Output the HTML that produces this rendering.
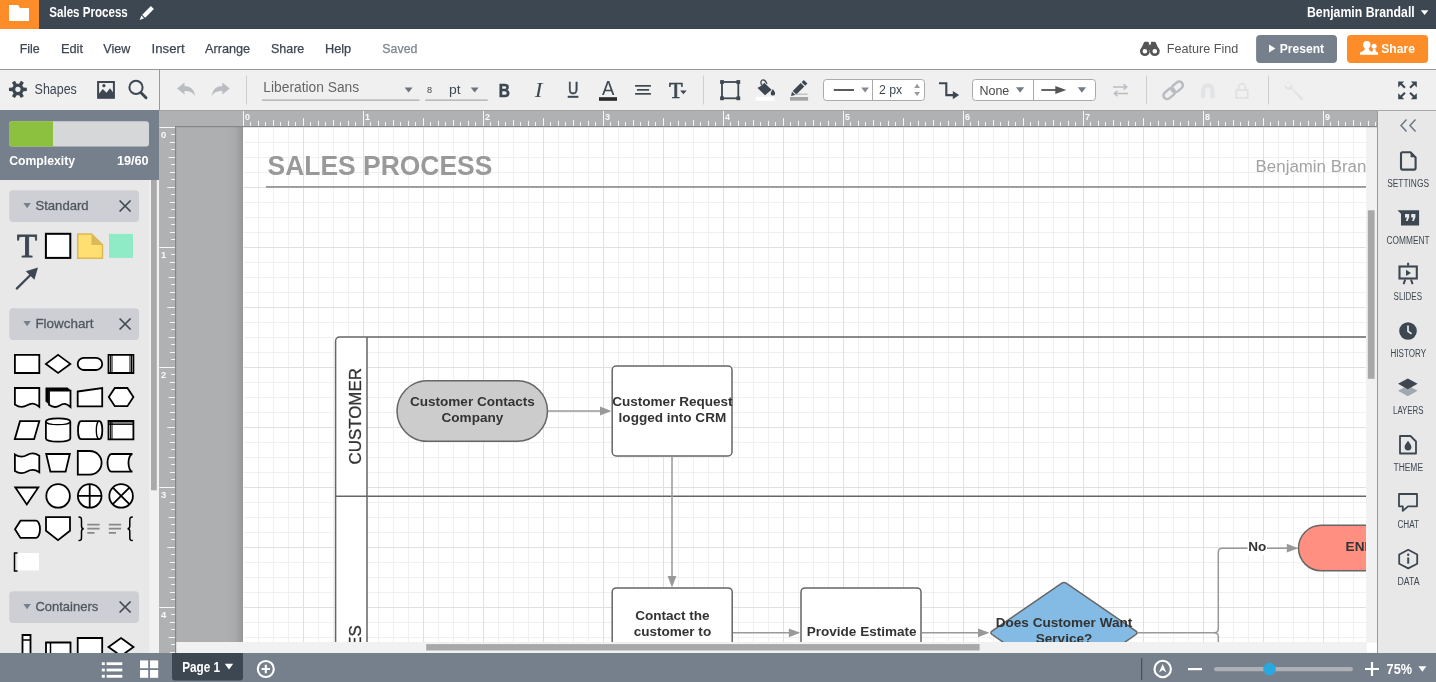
<!DOCTYPE html>
<html lang="en"><head><meta charset="utf-8"><title>Sales Process: Lucidchart</title>
<style>
html,body{margin:0;padding:0;background:#fff;}
body{width:1436px;height:682px;overflow:hidden;position:relative;font-family:"Liberation Sans",sans-serif;}
#app{position:absolute;left:0;top:0;width:1436px;height:682px;overflow:hidden;background:#e8e8e8;}
svg text{white-space:pre;}
#app>div{will-change:transform;}
</style></head><body><div id="app">
<div id="topbar" style="position:absolute;left:0px;top:0px;width:1436px;height:29px;background:#3d4752;overflow:hidden;"><svg width="1436" height="29" viewBox="0 0 1436 29" style="position:absolute;left:0;top:0;display:block">
<rect x="0" y="0" width="39" height="29" fill="#fd8d29"/>
<path d="M9 5.100 H18 L20 8 H29 V21 H9 Z" fill="#fff"/>
<text x="49.30" y="17.00" font-family="Liberation Sans, sans-serif" font-size="14.4" font-weight="bold" fill="#fff" textLength="78.50" lengthAdjust="spacingAndGlyphs" >Sales Process</text>
<g transform="translate(139.7,6)" fill="#fff"><path d="M11.2 0 l3 3 l-8.7 8.7 l-3 -3 z"/><path d="M1.7 9.6 l2.7 2.7 l-4.4 1.7 z"/></g>
<text x="1307.00" y="17.00" font-family="Liberation Sans, sans-serif" font-size="14.4" font-weight="bold" fill="#fff" textLength="107.72" lengthAdjust="spacingAndGlyphs" >Benjamin Brandall</text>
<path d="M1420.8 10.3 h7.6 l-3.8 4.8 z" fill="#fff"/>
</svg></div>
<div id="menubar" style="position:absolute;left:0px;top:29px;width:1436px;height:41px;background:#ffffff;overflow:hidden;border-bottom:1px solid #999;box-sizing:border-box;"><svg width="1436" height="41" viewBox="0 29 1436 41" style="position:absolute;left:0;top:0;display:block">
<text x="19.70" y="52.60" font-family="Liberation Sans, sans-serif" font-size="13.3" fill="#3d4752" textLength="20.11" lengthAdjust="spacingAndGlyphs" stroke="#3d4752" stroke-width="0.250">File</text>
<text x="60.90" y="52.60" font-family="Liberation Sans, sans-serif" font-size="13.3" fill="#3d4752" textLength="22.10" lengthAdjust="spacingAndGlyphs" stroke="#3d4752" stroke-width="0.250">Edit</text>
<text x="103.30" y="52.60" font-family="Liberation Sans, sans-serif" font-size="13.3" fill="#3d4752" textLength="26.93" lengthAdjust="spacingAndGlyphs" stroke="#3d4752" stroke-width="0.250">View</text>
<text x="151.60" y="52.60" font-family="Liberation Sans, sans-serif" font-size="13.3" fill="#3d4752" textLength="32.98" lengthAdjust="spacingAndGlyphs" stroke="#3d4752" stroke-width="0.250">Insert</text>
<text x="205.00" y="52.60" font-family="Liberation Sans, sans-serif" font-size="13.3" fill="#3d4752" textLength="45.19" lengthAdjust="spacingAndGlyphs" stroke="#3d4752" stroke-width="0.250">Arrange</text>
<text x="270.90" y="52.60" font-family="Liberation Sans, sans-serif" font-size="13.3" fill="#3d4752" textLength="33.42" lengthAdjust="spacingAndGlyphs" stroke="#3d4752" stroke-width="0.250">Share</text>
<text x="325.00" y="52.60" font-family="Liberation Sans, sans-serif" font-size="13.3" fill="#3d4752" textLength="26.20" lengthAdjust="spacingAndGlyphs" stroke="#3d4752" stroke-width="0.250">Help</text>
<text x="382.30" y="52.60" font-family="Liberation Sans, sans-serif" font-size="13.3" fill="#7b858f" textLength="35.10" lengthAdjust="spacingAndGlyphs" stroke="#7b858f" stroke-width="0.250">Saved</text>
<g fill="#555"><path d="M1140.200 51 L1143.800 42.800 Q1144.200 41.800 1145.300 41.800 H1147.700 Q1148.900 41.800 1148.900 43 V51 Z"/><path d="M1159.500 51 L1155.900 42.800 Q1155.500 41.800 1154.400 41.800 H1152 Q1150.800 41.800 1150.800 43 V51 Z"/><rect x="1148.500" y="44.600" width="2.700" height="5.400"/></g>
<circle cx="1144.900" cy="51.200" r="3.600" fill="#fff" stroke="#555" stroke-width="2.600"/><circle cx="1154.800" cy="51.200" r="3.600" fill="#fff" stroke="#555" stroke-width="2.600"/>
<text x="1166.80" y="52.80" font-family="Liberation Sans, sans-serif" font-size="13.5" fill="#555" textLength="71.48" lengthAdjust="spacingAndGlyphs" >Feature Find</text>
<rect x="1256.100" y="35" width="80.900" height="28" rx="4" fill="#76808c"/>
<path d="M1269 44.5 l6.4 4 l-6.4 4 z" fill="#fff"/>
<text x="1279.70" y="52.60" font-family="Liberation Sans, sans-serif" font-size="12.9" font-weight="bold" fill="#fff" textLength="44.38" lengthAdjust="spacingAndGlyphs" >Present</text>
<rect x="1347" y="35" width="81.100" height="28" rx="4" fill="#fd8d29"/>
<g fill="#fff"><circle cx="1366.800" cy="44.700" r="3.700"/><path d="M1360 54.800 v-2.300 c2.500 -0.800 4.800 -1.700 5 -4.500 h3.600 c0.200 2.800 2.500 3.700 5 4.500 v2.300 z"/><circle cx="1374.100" cy="46.300" r="2.500"/><path d="M1371 54.800 v-2 c1.500 -0.800 2 -1.800 2 -3.800 h2.300 c0 2 0.800 3 2.700 3.600 v2.200 z"/></g>
<text x="1381.30" y="52.60" font-family="Liberation Sans, sans-serif" font-size="12.9" font-weight="bold" fill="#fff" textLength="33.57" lengthAdjust="spacingAndGlyphs" >Share</text>
</svg></div>
<div id="toolbar" style="position:absolute;left:0px;top:70px;width:1436px;height:40px;background:#f0f0f0;overflow:hidden;"><svg width="1436" height="40" viewBox="0 70 1436 40" style="position:absolute;left:0;top:0;display:block">
<path d="M26.84 87.68 L26.84 91.12 L23.52 91.20 L22.27 93.37 L23.86 96.28 L20.88 98.00 L19.15 95.17 L16.65 95.17 L14.92 98.00 L11.94 96.28 L13.53 93.37 L12.28 91.20 L8.96 91.12 L8.96 87.68 L12.28 87.60 L13.53 85.43 L11.94 82.52 L14.92 80.80 L16.65 83.63 L19.15 83.63 L20.88 80.80 L23.86 82.52 L22.27 85.43 L23.52 87.60 z M17.90 86.70 a2.700 2.700 0 1 0 0.010 0 z" fill="#3d4752" fill-rule="evenodd"/>
<text x="34.60" y="93.80" font-family="Liberation Sans, sans-serif" font-size="14" fill="#3d4752" textLength="42.18" lengthAdjust="spacingAndGlyphs" >Shapes</text>
<rect x="98.100" y="82" width="15.800" height="15.800" fill="none" stroke="#3d4752" stroke-width="2"/>
<path d="M98.500 97.500 v-3.200 l4.300 -5.400 l3.700 3.900 l3.500 -4.600 l4.200 5.800 v3.500 z" fill="#3d4752"/><circle cx="103.900" cy="85.700" r="1.600" fill="#3d4752"/>
<circle cx="136" cy="87.400" r="6.600" fill="none" stroke="#3d4752" stroke-width="2"/><path d="M141.300 92.900 l4.700 4.800" stroke="#3d4752" stroke-width="2.900" stroke-linecap="round"/>
<rect x="159" y="70" width="1" height="40" fill="#999"/>
<path d="M177 88.5 l7.5 -6 v3.7 c6 0 9.500 2.500 10.500 9.800 c-2.500 -3.800 -5.500 -5 -10.500 -5 v3.600 z" fill="#b9bdc2"/>
<path d="M229.800 88.500 l-7.500 -6 v3.700 c-6 0 -9.500 2.500 -10.500 9.800 c2.500 -3.800 5.500 -5 10.500 -5 v3.600 z" fill="#b9bdc2"/>
<rect x="246" y="75.500" width="1" height="29" fill="#cfcfcf"/>
<text x="263.30" y="92.30" font-family="Liberation Sans, sans-serif" font-size="14" fill="#666" textLength="95.88" lengthAdjust="spacingAndGlyphs" >Liberation Sans</text>
<rect x="262" y="99.600" width="157.500" height="1" fill="#999"/>
<path d="M404.600 87.400 h8 l-4 5.100 z" fill="#6d747d"/>
<text x="426.90" y="93.00" font-family="Liberation Sans, sans-serif" font-size="9.6" fill="#444" textLength="5.08" lengthAdjust="spacingAndGlyphs" >8</text>
<text x="449.00" y="93.60" font-family="Liberation Sans, sans-serif" font-size="13.5" fill="#3d4752" textLength="11.61" lengthAdjust="spacingAndGlyphs" >pt</text>
<path d="M470.700 87.400 h8 l-4 5.100 z" fill="#6d747d"/>
<rect x="425.200" y="99.600" width="62.500" height="1" fill="#999"/>
<text x="498.80" y="96.50" font-family="Liberation Sans, sans-serif" font-size="19" font-weight="bold" fill="#3d4752" textLength="11.18" lengthAdjust="spacingAndGlyphs" stroke="#3d4752" stroke-width="0.500">B</text>
<text x="534.74" y="96.80" font-family="Liberation Serif, serif" font-size="21.5" font-style="italic" fill="#3d4752" textLength="7.75" lengthAdjust="spacingAndGlyphs" >I</text>
<text x="567.90" y="94.20" font-family="Liberation Sans, sans-serif" font-size="17" fill="#3d4752" textLength="10.32" lengthAdjust="spacingAndGlyphs" stroke="#3d4752" stroke-width="0.500">U</text>
<rect x="567.700" y="95.800" width="10.700" height="2" fill="#3d4752"/>
<text x="601.90" y="95.10" font-family="Liberation Sans, sans-serif" font-size="21" fill="#3d4752" textLength="12.41" lengthAdjust="spacingAndGlyphs" >A</text>
<rect x="599" y="97.200" width="18" height="3.600" fill="#2a2a2a"/>
<rect x="635.100" y="85" width="15.800" height="1.700" fill="#3d4752"/><rect x="637" y="89" width="12.100" height="1.700" fill="#3d4752"/><rect x="635.100" y="93" width="15.800" height="1.700" fill="#3d4752"/>
<text x="669.00" y="97.80" font-family="Liberation Serif, serif" font-size="24" fill="#3d4752" textLength="13.67" lengthAdjust="spacingAndGlyphs" stroke="#3d4752" stroke-width="0.700">T</text>
<path d="M680.100 90.600 h6.600 l-3.300 3.600 z" fill="#3d4752"/>
<rect x="703" y="75.500" width="1" height="29" fill="#cfcfcf"/>
<rect x="722" y="82" width="16.300" height="16.300" fill="none" stroke="#3d4752" stroke-width="1.800"/>
<rect x="720.1" y="80.1" width="3.800" height="3.800" fill="#3d4752"/>
<rect x="736.4" y="80.1" width="3.800" height="3.800" fill="#3d4752"/>
<rect x="720.1" y="96.4" width="3.800" height="3.800" fill="#3d4752"/>
<rect x="736.4" y="96.4" width="3.800" height="3.800" fill="#3d4752"/>
<g transform="translate(757,79.400)"><path d="M7 3 l7.600 7.400 l-6.600 5.400 l-7.400 -7.200 z" fill="#3d4752"/><path d="M2.300 7.300 l6.200 -5.200" stroke="#f0f0f0" stroke-width="1" fill="none"/><path d="M4.600 5.600 c-1.500 -2.500 -0.500 -5 1.200 -5.200 c1.500 -0.200 3 1.200 4.200 4" stroke="#3d4752" stroke-width="1.300" fill="none"/><path d="M15.900 9.600 c1.400 2.200 2.200 3.300 2.200 4.400 a2.200 2.200 0 0 1 -4.400 0 c0 -1.100 0.800 -2.200 2.200 -4.400 z" fill="#3d4752"/></g>
<rect x="755.900" y="96.800" width="18.400" height="4" fill="#fff"/>
<g transform="translate(791.500,80)" fill="#3d4752"><path d="M12.300 0 l3.600 3.600 l-2.200 2.200 l-3.600 -3.600 z"/><path d="M9.200 2.900 l3.600 3.600 l-8 8 l-3.600 -3.600 z"/><path d="M0.500 11.800 l3.300 3.300 l-4.300 1 z"/></g>
<rect x="794.500" y="93.700" width="13" height="0.900" fill="#a4a4a4"/><rect x="790" y="97" width="18.100" height="3.700" fill="#a4a4a4"/>
<rect x="823.500" y="79.500" width="101" height="21" rx="3" fill="#fff" stroke="#aaa" stroke-width="1"/>
<rect x="872" y="79.500" width="1" height="21" fill="#aaa"/>
<rect x="833.800" y="89.200" width="20.200" height="1.600" fill="#333"/>
<path d="M861.200 87.600 h7.800 l-3.900 4.900 z" fill="#858a90"/>
<text x="878.90" y="94.00" font-family="Liberation Sans, sans-serif" font-size="13.2" fill="#3d4752" textLength="23.39" lengthAdjust="spacingAndGlyphs" >2 px</text>
<path d="M914.200 87.900 h5.800 l-2.900 -4.100 z M914.200 91.900 h5.800 l-2.900 4.100 z" fill="#999"/>
<path d="M939 83.300 h7.300 v11.800 h7" fill="none" stroke="#3d4752" stroke-width="2.100"/><path d="M952.800 90.900 l6.400 4.200 l-6.400 4.200 z" fill="#3d4752"/>
<rect x="972.500" y="79.500" width="123" height="21" rx="3" fill="#fff" stroke="#aaa" stroke-width="1"/>
<rect x="1033" y="79.500" width="1" height="21" fill="#aaa"/>
<text x="979.40" y="94.50" font-family="Liberation Sans, sans-serif" font-size="13.6" fill="#484848" textLength="29.91" lengthAdjust="spacingAndGlyphs" >None</text>
<path d="M1016 87.200 h8.200 l-4.100 5.500 z" fill="#707c8a"/>
<rect x="1041.300" y="89.100" width="17" height="1.800" fill="#555"/><path d="M1055.300 85.900 l11 4.100 l-11 4.100 z" fill="#555"/>
<path d="M1077.800 87.200 h8.200 l-4.100 5.500 z" fill="#707c8a"/>
<g stroke="#b9bdc2" stroke-width="1.500" fill="none"><path d="M1113 87 h13.500 M1123.500 84.300 l3.200 2.700 l-3.200 2.700"/><path d="M1128 93.500 h-13.500 M1117.500 90.800 l-3.200 2.700 l3.200 2.700"/></g>
<rect x="1146" y="75.500" width="1" height="29" fill="#cfcfcf"/>
<g transform="translate(1173.200,90.300) rotate(-40)" fill="none" stroke="#b9bdc2" stroke-width="2.500"><rect x="-11.500" y="-3.700" width="12.500" height="7.400" rx="3.700"/><rect x="-1" y="-3.700" width="12.500" height="7.400" rx="3.700"/></g>
<path d="M1201 98 v-8 a6.800 6.800 0 0 1 13.600 0 v8 h-4.200 v-8 a2.600 2.600 0 0 0 -5.200 0 v8 z" fill="#e2e3e5"/>
<g fill="none" stroke="#e0e1e3"><rect x="1236.300" y="90" width="11.500" height="8" stroke-width="1.800"/><path d="M1238.600 90 v-3 a3.400 3.400 0 0 1 6.800 0 v3" stroke-width="1.800"/></g>
<rect x="1268" y="75.500" width="1" height="29" fill="#cfcfcf"/>
<g transform="translate(1283.800,82)"><path d="M2 0.800 a5 5 0 0 1 6.800 6 l10.200 8.600 a1.500 1.500 0 0 1 -2.300 2.300 l-8.700 -10.200 a5 5 0 0 1 -7.200 -5.200 l3 3 l3 -0.800 l0.500 -2.800 z" fill="#e2e3e5"/></g>
<g fill="#3d4752">
<path d="M1398.2 81.4 h6.0 l-2.1 2.1 l3.6 3.6 l-1.5 1.5 l-3.6 -3.6 l-2.4 2.4 z"/>
<path d="M1416.8 81.4 h-6.0 l2.1 2.1 l-3.6 3.6 l1.5 1.5 l3.6 -3.6 l2.4 2.4 z"/>
<path d="M1398.2 99.2 h6.0 l-2.1 -2.1 l3.6 -3.6 l-1.5 -1.5 l-3.6 3.6 l-2.4 -2.4 z"/>
<path d="M1416.8 99.2 h-6.0 l2.1 -2.1 l-3.6 -3.6 l1.5 -1.5 l3.6 3.6 l2.4 -2.4 z"/>
</g>
</svg></div>
<div id="leftpanel" style="position:absolute;left:0px;top:110px;width:159px;height:543px;background:#e8e8e8;overflow:hidden;"><svg width="159" height="543" viewBox="0 110 159 543" style="position:absolute;left:0;top:0;display:block">
<rect x="0" y="110" width="159" height="70" fill="#76808c"/>
<rect x="9" y="121.300" width="140" height="25.300" rx="3" fill="#d6d7d9"/>
<path d="M12 121.300 h41 v25.300 h-41 a3 3 0 0 1 -3 -3 v-19.300 a3 3 0 0 1 3 -3 z" fill="#8cc03f"/>
<text x="9.20" y="164.90" font-family="Liberation Sans, sans-serif" font-size="12.8" font-weight="bold" fill="#fff" textLength="65.80" lengthAdjust="spacingAndGlyphs" >Complexity</text>
<text x="116.90" y="164.90" font-family="Liberation Sans, sans-serif" font-size="12.8" font-weight="bold" fill="#fff" textLength="31.80" lengthAdjust="spacingAndGlyphs" >19/60</text>
<rect x="149.300" y="180" width="9.700" height="474" fill="#f1f1f1"/>
<rect x="151" y="180" width="5.800" height="310.300" fill="#a9a9a9"/>
<rect x="9.200" y="190.2" width="129.800" height="31.700" rx="4" fill="#cecfd4"/>
<path d="M23.400 202.9 h7.400 l-3.700 5.300 z" fill="#76808c"/>
<text x="35.40" y="209.90" font-family="Liberation Sans, sans-serif" font-size="13.4" fill="#50575f" textLength="53.27" lengthAdjust="spacingAndGlyphs" stroke="#50575f" stroke-width="0.300">Standard</text>
<path d="M119.600 200.5 l11 11 M130.600 200.5 l-11 11" stroke="#444a52" stroke-width="1.700" fill="none"/>
<text x="17.00" y="257.40" font-family="Liberation Serif, serif" font-size="34" fill="#3d4752" textLength="20.22" lengthAdjust="spacingAndGlyphs" stroke="#3d4752" stroke-width="0.900">T</text>
<rect x="45.900" y="233.800" width="24.400" height="24.100" fill="#fff" stroke="#000" stroke-width="2"/>
<path d="M77.700 233.900 h13.800 l11 11 v13.300 h-24.800 z" fill="#ffdf71" stroke="#dcb950" stroke-width="1.500"/><path d="M91.500 233.900 v11 h11 z" fill="#dcb957"/>
<rect x="109" y="233.900" width="24" height="24" fill="#8eebc6"/>
<path d="M16.200 289.100 l15 -14.900" stroke="#3d4752" stroke-width="2.200"/><path d="M38 267.500 l-3.600 12.300 l-8.600 -8.600 z" fill="#3d4752"/>
<rect x="9.200" y="308.2" width="129.800" height="31.700" rx="4" fill="#cecfd4"/>
<path d="M23.400 320.9 h7.400 l-3.700 5.300 z" fill="#76808c"/>
<text x="35.40" y="327.90" font-family="Liberation Sans, sans-serif" font-size="13.4" fill="#50575f" textLength="58.17" lengthAdjust="spacingAndGlyphs" stroke="#50575f" stroke-width="0.300">Flowchart</text>
<path d="M119.600 318.5 l11 11 M130.600 318.5 l-11 11" stroke="#444a52" stroke-width="1.700" fill="none"/>
<path d="M14.900 354.800 h24.400 v18.200 h-24.400 z" fill="#fff" stroke="#000" stroke-width="1.8" stroke-linejoin="miter" />
<path d="M58.100 354.900 l12.200 9 l-12.200 9 l-12.200 -9 z" fill="#fff" stroke="#000" stroke-width="1.8" stroke-linejoin="miter" />
<rect x="77.700" y="357.800" width="24.500" height="12.200" rx="6.100" fill="#fff" stroke="#000" stroke-width="1.8"/>
<path d="M108.500 354.800 h24.900 v18.200 h-24.900 z" fill="#fff" stroke="#000" stroke-width="1.8" stroke-linejoin="miter" />
<path d="M110.600 354.800 v18.200 M112 354.800 v18.200 M130 354.800 v18.200 M131.500 354.800 v18.200" stroke="#000" stroke-width="1"/>
<path d="M14.900 388 h24.400 v18.800 c-5 -4 -8 -4 -12.200 -1.500 c-4.200 2.500 -7.500 2.500 -12.200 -0.800 z" fill="#fff" stroke="#000" stroke-width="1.8" stroke-linejoin="miter" />
<path d="M45.500 387.500 h22 l3.500 3 h-22.500 v13.500 l-3 -2.500 z" fill="#000"/>
<path d="M49 390.600 h21.500 v16.400 c-4.500 -3.800 -7 -3.800 -10.700 -1.500 c-3.700 2.300 -6.600 2.300 -10.800 -0.700 z" fill="#fff" stroke="#000" stroke-width="1.8" stroke-linejoin="miter" />
<path d="M77.700 391.500 l24.500 -3.500 v18.400 h-24.500 z" fill="#fff" stroke="#000" stroke-width="1.8" stroke-linejoin="miter" />
<path d="M108.800 397.100 l6 -9.100 h12.600 l6 9.100 l-6 9.100 h-12.600 z" fill="#fff" stroke="#000" stroke-width="1.8" stroke-linejoin="miter" />
<path d="M20 421.200 h19.300 l-5.200 18 h-19.300 z" fill="#fff" stroke="#000" stroke-width="1.8" stroke-linejoin="miter" />
<path d="M45.900 421.500 a12.200 3.200 0 0 1 24.400 0 v17 a12.200 3.200 0 0 1 -24.400 0 z" fill="#fff" stroke="#000" stroke-width="1.8" stroke-linejoin="miter" />
<path d="M45.900 421.500 a12.200 3.200 0 0 0 24.400 0" fill="none" stroke="#000" stroke-width="1.300"/>
<path d="M81 421.200 h18.300 a3 9 0 0 1 0 18 h-18.300 a3 9 0 0 1 0 -18 z" fill="#fff" stroke="#000" stroke-width="1.8" stroke-linejoin="miter" />
<path d="M99.300 421.200 a3 9 0 0 0 0 18" fill="none" stroke="#000" stroke-width="1.300"/>
<path d="M108.500 421 h24.900 v18.400 h-24.900 z" fill="#fff" stroke="#000" stroke-width="1.8" stroke-linejoin="miter" />
<path d="M110.600 421 v18.400 M112 421 v18.400 M108.500 423 h24.900 M108.500 424.400 h24.900" stroke="#000" stroke-width="1"/>
<path d="M14.900 454.500 c4.500 3 8 3 12.200 0.500 c4.200 -2.500 7.500 -2.500 12.200 0.700 v16.500 c-4.700 -3.200 -8 -3.200 -12.200 -0.700 c-4.200 2.500 -7.700 2.500 -12.200 -0.500 z" fill="#fff" stroke="#000" stroke-width="1.8" stroke-linejoin="miter" />
<path d="M46.200 454 h23.600 l-4.200 17.700 h-15.200 z" fill="#fff" stroke="#000" stroke-width="1.8" stroke-linejoin="miter" />
<path d="M77.800 451 h12 a11.800 11.800 0 0 1 0 23.600 h-12 z" fill="#fff" stroke="#000" stroke-width="1.8" stroke-linejoin="miter" />
<path d="M111.500 454 h21 a4 8.800 0 0 0 0 17.700 h-21 a4 8.800 0 0 1 0 -17.700 z" fill="#fff" stroke="#000" stroke-width="1.8" stroke-linejoin="miter" />
<path d="M15.300 487.500 h23 l-11.500 17 z" fill="#fff" stroke="#000" stroke-width="1.8" stroke-linejoin="miter" />
<circle cx="58.1" cy="495.900" r="11.800" fill="#fff" stroke="#000" stroke-width="1.8"/>
<circle cx="89.7" cy="495.900" r="11.800" fill="#fff" stroke="#000" stroke-width="1.8"/>
<circle cx="121.1" cy="495.900" r="11.800" fill="#fff" stroke="#000" stroke-width="1.8"/>
<path d="M89.700 484.100 v23.600 M77.900 495.900 h23.600" stroke="#000" stroke-width="1.8"/>
<path d="M112.800 487.600 l16.600 16.600 M129.400 487.600 l-16.600 16.600" stroke="#000" stroke-width="1.8"/>
<path d="M20.500 520.700 h15.500 a4 8.600 0 0 1 0 17.200 h-15.500 l-5.500 -8.600 z" fill="#fff" stroke="#000" stroke-width="1.8" stroke-linejoin="miter" />
<path d="M46 517.200 h24 v13.500 l-12 9.500 l-12 -9.500 z" fill="#fff" stroke="#000" stroke-width="1.8" stroke-linejoin="miter" />
<path d="M78.500 517 c3 0 3 1 3 4 v5 c0 2 0.500 2.800 2.300 2.800 c-1.800 0 -2.300 0.800 -2.300 2.800 v5 c0 3 0 4 -3 4" fill="none" stroke="#000" stroke-width="1.500"/>
<path d="M87.300 524.600 h12.300 M87.300 528.700 h12.300 M87.300 532.800 h7.200" stroke="#888" stroke-width="1.800"/>
<path d="M108.800 524.600 h12.300 M108.800 528.700 h12.300 M108.800 532.800 h7.200" stroke="#888" stroke-width="1.800"/>
<path d="M132.800 517 c-3 0 -3 1 -3 4 v5 c0 2 -0.500 2.800 -2.300 2.800 c1.800 0 2.300 0.800 2.300 2.800 v5 c0 3 0 4 3 4" fill="none" stroke="#000" stroke-width="1.500"/>
<rect x="17.500" y="553" width="21.500" height="17.400" fill="#fff"/>
<path d="M17.500 553 h-3 v18 h3" fill="none" stroke="#000" stroke-width="1.500"/>
<rect x="9.200" y="591.2" width="129.800" height="31.700" rx="4" fill="#cecfd4"/>
<path d="M23.400 603.9 h7.400 l-3.700 5.300 z" fill="#76808c"/>
<text x="35.40" y="610.90" font-family="Liberation Sans, sans-serif" font-size="13.4" fill="#50575f" textLength="62.89" lengthAdjust="spacingAndGlyphs" stroke="#50575f" stroke-width="0.300">Containers</text>
<path d="M119.600 601.5 l11 11 M130.600 601.5 l-11 11" stroke="#444a52" stroke-width="1.700" fill="none"/>
<path d="M22.500 635 h8 v20 h-8 z" fill="#fff" stroke="#000" stroke-width="1.8" stroke-linejoin="miter" />
<path d="M22.500 640 h8" stroke="#000" stroke-width="1.500"/>
<path d="M46 642.500 h24.500 v12 h-24.500 z" fill="#fff" stroke="#000" stroke-width="1.8" stroke-linejoin="miter" />
<path d="M50.500 642.500 v12" stroke="#000" stroke-width="1.500"/>
<path d="M77.700 638 h24.500 v20 h-24.500 z" fill="#fff" stroke="#000" stroke-width="1.8" stroke-linejoin="miter" />
<path d="M121 638 l12.500 9 l-12.500 9 l-12.500 -9 z" fill="#fff" stroke="#000" stroke-width="1.8" stroke-linejoin="miter" />
</svg></div>
<div id="canvas" style="position:absolute;left:159px;top:110px;width:1218px;height:543px;background:#aeafb1;overflow:hidden;"><svg width="1218" height="543" viewBox="159 110 1218 543" style="position:absolute;left:0;top:0;display:block">
<defs><linearGradient id="shl" x1="0" x2="1" y1="0" y2="0"><stop offset="0" stop-color="#aeafb1"/><stop offset="0.55" stop-color="#a9aaac"/><stop offset="1" stop-color="#959698"/></linearGradient><clipPath id="cv"><rect x="176" y="127" width="1190" height="515"/></clipPath></defs>
<rect x="176" y="127" width="1190" height="515" fill="#aeafb1"/>
<rect x="226" y="127" width="17" height="515" fill="url(#shl)"/>
<g clip-path="url(#cv)">
<rect x="243" y="127" width="1130" height="520" fill="#fff"/>
<path d="M258 127 v515 M273 127 v515 M288 127 v515 M318 127 v515 M333 127 v515 M348 127 v515 M378 127 v515 M393 127 v515 M408 127 v515 M438 127 v515 M453 127 v515 M468 127 v515 M498 127 v515 M513 127 v515 M528 127 v515 M558 127 v515 M573 127 v515 M588 127 v515 M618 127 v515 M633 127 v515 M648 127 v515 M678 127 v515 M693 127 v515 M708 127 v515 M738 127 v515 M753 127 v515 M768 127 v515 M798 127 v515 M813 127 v515 M828 127 v515 M858 127 v515 M873 127 v515 M888 127 v515 M918 127 v515 M933 127 v515 M948 127 v515 M978 127 v515 M993 127 v515 M1008 127 v515 M1038 127 v515 M1053 127 v515 M1068 127 v515 M1098 127 v515 M1113 127 v515 M1128 127 v515 M1158 127 v515 M1173 127 v515 M1188 127 v515 M1218 127 v515 M1233 127 v515 M1248 127 v515 M1278 127 v515 M1293 127 v515 M1308 127 v515 M1338 127 v515 M1353 127 v515 M243 142 h1123 M243 157 h1123 M243 172 h1123 M243 202 h1123 M243 217 h1123 M243 232 h1123 M243 262 h1123 M243 277 h1123 M243 292 h1123 M243 322 h1123 M243 337 h1123 M243 352 h1123 M243 382 h1123 M243 397 h1123 M243 412 h1123 M243 442 h1123 M243 457 h1123 M243 472 h1123 M243 502 h1123 M243 517 h1123 M243 532 h1123 M243 562 h1123 M243 577 h1123 M243 592 h1123 M243 622 h1123 M243 637 h1123" stroke="#f0f0f0" stroke-width="1" fill="none" transform="translate(0.5,0.5)"/>
<path d="M303 127 v515 M363 127 v515 M423 127 v515 M483 127 v515 M543 127 v515 M603 127 v515 M663 127 v515 M723 127 v515 M783 127 v515 M843 127 v515 M903 127 v515 M963 127 v515 M1023 127 v515 M1083 127 v515 M1143 127 v515 M1203 127 v515 M1263 127 v515 M1323 127 v515 M243 187 h1123 M243 247 h1123 M243 307 h1123 M243 367 h1123 M243 427 h1123 M243 487 h1123 M243 547 h1123 M243 607 h1123" stroke="#e0e0e0" stroke-width="1" fill="none" transform="translate(0.5,0.5)"/>
<text x="267.50" y="174.50" font-family="Liberation Sans, sans-serif" font-size="27" font-weight="bold" fill="#999" textLength="224.79" lengthAdjust="spacingAndGlyphs" >SALES PROCESS</text>
<rect x="266" y="186" width="1100" height="1.900" fill="#9c9c9c"/>
<text x="1255.60" y="172.30" font-family="Liberation Sans, sans-serif" font-size="16.9" fill="#a3a3a3" text-anchor="start" >Benjamin Brandall</text>
<path d="M335.600 642 v-301 a4 4 0 0 1 4 -4 h27.400 v305 z" fill="#fff"/>
<path d="M335.600 650 v-309 a4 4 0 0 1 4 -4 h1030 M367 337 v313 M335.600 496.300 h1034" fill="none" stroke="#666" stroke-width="1.500"/>
<text transform="translate(361.100,416.300) rotate(-90)" font-family="Liberation Sans, sans-serif" font-size="16.900" fill="#333" stroke="#333" stroke-width="0.300" text-anchor="middle">CUSTOMER</text>
<text transform="translate(361.100,625.300) rotate(-90)" font-family="Liberation Sans, sans-serif" font-size="16.900" fill="#333" stroke="#333" stroke-width="0.300" text-anchor="end">SALES</text>
<rect x="397" y="380.800" width="150.500" height="60.500" rx="30.250" fill="#ccc" stroke="#666" stroke-width="1.500"/>
<text x="472.40" y="405.60" font-family="Liberation Sans, sans-serif" font-size="13.55" font-weight="bold" fill="#333" text-anchor="middle">Customer Contacts</text>
<text x="472.40" y="421.60" font-family="Liberation Sans, sans-serif" font-size="13.55" font-weight="bold" fill="#333" text-anchor="middle">Company</text>
<path d="M548 411 h54" stroke="#999" stroke-width="1.500" fill="none"/><path d="M611.500 411 l-11.500 -4.400 v8.800 z" fill="#999"/>
<rect x="612.200" y="366" width="119.800" height="90" rx="4" fill="#fff" stroke="#666" stroke-width="1.500"/>
<text x="672.40" y="405.60" font-family="Liberation Sans, sans-serif" font-size="13.55" font-weight="bold" fill="#333" text-anchor="middle">Customer Request</text>
<text x="672.40" y="421.60" font-family="Liberation Sans, sans-serif" font-size="13.55" font-weight="bold" fill="#333" text-anchor="middle">logged into CRM</text>
<path d="M672 456.800 v121" stroke="#999" stroke-width="1.500" fill="none"/><path d="M672 587.500 l-4.400 -11.500 h8.800 z" fill="#999"/>
<rect x="612.200" y="587.900" width="120" height="90" rx="4" fill="#fff" stroke="#666" stroke-width="1.500"/>
<text x="672.40" y="619.50" font-family="Liberation Sans, sans-serif" font-size="13.55" font-weight="bold" fill="#333" text-anchor="middle">Contact the</text>
<text x="672.40" y="635.50" font-family="Liberation Sans, sans-serif" font-size="13.55" font-weight="bold" fill="#333" text-anchor="middle">customer to</text>
<path d="M733 632.800 h58" stroke="#999" stroke-width="1.500" fill="none"/><path d="M800.300 632.800 l-11.500 -4.400 v8.800 z" fill="#999"/>
<rect x="801" y="587.900" width="120" height="90" rx="4" fill="#fff" stroke="#666" stroke-width="1.500"/>
<text x="861.70" y="635.60" font-family="Liberation Sans, sans-serif" font-size="13.55" font-weight="bold" fill="#333" text-anchor="middle">Provide Estimate</text>
<path d="M921.800 632.800 h58" stroke="#999" stroke-width="1.500" fill="none"/><path d="M989.500 632.800 l-11.500 -4.400 v8.800 z" fill="#999"/>
<path d="M1061.500 583.300 q2.500 -1.800 5 0 l69.500 47.800 q2.200 1.700 0 3.400 l-69.500 47.800 q-2.500 1.800 -5 0 l-69.500 -47.800 q-2.200 -1.700 0 -3.400 z" fill="#83bbe5" stroke="#666" stroke-width="1.500"/>
<text x="1064.00" y="627.40" font-family="Liberation Sans, sans-serif" font-size="13.55" font-weight="bold" fill="#333" text-anchor="middle">Does Customer Want</text>
<text x="1064.00" y="642.60" font-family="Liberation Sans, sans-serif" font-size="13.55" font-weight="bold" fill="#333" text-anchor="middle">Service?</text>
<path d="M1137.800 632.800 h76.500 q4 0 4 -4 v-76.600 q0 -4 4 -4 h67" stroke="#999" stroke-width="1.500" fill="none"/>
<path d="M1214 632.800 q4.300 0 4.300 4 v10" stroke="#999" stroke-width="1.500" fill="none"/>
<path d="M1298.300 548.200 l-11.500 -4.400 v8.800 z" fill="#999"/>
<rect x="1247.500" y="540" width="19.500" height="15" fill="#fff"/>
<text x="1257.20" y="551.00" font-family="Liberation Sans, sans-serif" font-size="13.55" font-weight="bold" fill="#333" text-anchor="middle">No</text>
<rect x="1298.500" y="525.300" width="150" height="45.500" rx="22.750" fill="#ff8f80" stroke="#666" stroke-width="1.500"/>
<text x="1359.90" y="551.30" font-family="Liberation Sans, sans-serif" font-size="13.55" font-weight="bold" fill="#333" text-anchor="middle">END</text>
</g>
<rect x="1366" y="127" width="11" height="515" fill="#f1f1f1"/>
<rect x="1367.800" y="210.300" width="6.800" height="168.500" fill="#a8a8a8"/>
<rect x="176" y="642" width="1190" height="11" fill="#f1f1f1"/>
<rect x="426.200" y="644.100" width="553.400" height="6.400" fill="#a8a8a8"/>
<rect x="1366" y="642" width="11" height="11" fill="#f1f1f1"/><rect x="1366.800" y="642.700" width="10" height="9.600" fill="#fff"/>
<rect x="159" y="110" width="1218" height="16.500" fill="#b0b1b3"/>
<rect x="159" y="110" width="16.500" height="543" fill="#b0b1b3"/>
<rect x="159" y="110" width="1218" height="1" fill="#a2a3a5"/>
<rect x="175.500" y="126" width="1201.500" height="1.200" fill="#858688"/>
<rect x="175" y="126" width="1.200" height="527" fill="#858688"/>
<path d="M243.5 111.0 V126 M250.5 122.1 V126 M258.5 120.8 V126 M265.5 122.1 V126 M273.5 119.9 V126 M280.5 122.1 V126 M288.5 120.8 V126 M295.5 122.1 V126 M303.5 118.2 V126 M310.5 122.1 V126 M318.5 120.8 V126 M325.5 122.1 V126 M333.5 119.9 V126 M340.5 122.1 V126 M348.5 120.8 V126 M355.5 122.1 V126 M363.5 111.0 V126 M370.5 122.1 V126 M378.5 120.8 V126 M385.5 122.1 V126 M393.5 119.9 V126 M400.5 122.1 V126 M408.5 120.8 V126 M415.5 122.1 V126 M423.5 118.2 V126 M430.5 122.1 V126 M438.5 120.8 V126 M445.5 122.1 V126 M453.5 119.9 V126 M460.5 122.1 V126 M468.5 120.8 V126 M475.5 122.1 V126 M483.5 111.0 V126 M490.5 122.1 V126 M498.5 120.8 V126 M505.5 122.1 V126 M513.5 119.9 V126 M520.5 122.1 V126 M528.5 120.8 V126 M535.5 122.1 V126 M543.5 118.2 V126 M550.5 122.1 V126 M558.5 120.8 V126 M565.5 122.1 V126 M573.5 119.9 V126 M580.5 122.1 V126 M588.5 120.8 V126 M595.5 122.1 V126 M603.5 111.0 V126 M610.5 122.1 V126 M618.5 120.8 V126 M625.5 122.1 V126 M633.5 119.9 V126 M640.5 122.1 V126 M648.5 120.8 V126 M655.5 122.1 V126 M663.5 118.2 V126 M670.5 122.1 V126 M678.5 120.8 V126 M685.5 122.1 V126 M693.5 119.9 V126 M700.5 122.1 V126 M708.5 120.8 V126 M715.5 122.1 V126 M723.5 111.0 V126 M730.5 122.1 V126 M738.5 120.8 V126 M745.5 122.1 V126 M753.5 119.9 V126 M760.5 122.1 V126 M768.5 120.8 V126 M775.5 122.1 V126 M783.5 118.2 V126 M790.5 122.1 V126 M798.5 120.8 V126 M805.5 122.1 V126 M813.5 119.9 V126 M820.5 122.1 V126 M828.5 120.8 V126 M835.5 122.1 V126 M843.5 111.0 V126 M850.5 122.1 V126 M858.5 120.8 V126 M865.5 122.1 V126 M873.5 119.9 V126 M880.5 122.1 V126 M888.5 120.8 V126 M895.5 122.1 V126 M903.5 118.2 V126 M910.5 122.1 V126 M918.5 120.8 V126 M925.5 122.1 V126 M933.5 119.9 V126 M940.5 122.1 V126 M948.5 120.8 V126 M955.5 122.1 V126 M963.5 111.0 V126 M970.5 122.1 V126 M978.5 120.8 V126 M985.5 122.1 V126 M993.5 119.9 V126 M1000.5 122.1 V126 M1008.5 120.8 V126 M1015.5 122.1 V126 M1023.5 118.2 V126 M1030.5 122.1 V126 M1038.5 120.8 V126 M1045.5 122.1 V126 M1053.5 119.9 V126 M1060.5 122.1 V126 M1068.5 120.8 V126 M1075.5 122.1 V126 M1083.5 111.0 V126 M1090.5 122.1 V126 M1098.5 120.8 V126 M1105.5 122.1 V126 M1113.5 119.9 V126 M1120.5 122.1 V126 M1128.5 120.8 V126 M1135.5 122.1 V126 M1143.5 118.2 V126 M1150.5 122.1 V126 M1158.5 120.8 V126 M1165.5 122.1 V126 M1173.5 119.9 V126 M1180.5 122.1 V126 M1188.5 120.8 V126 M1195.5 122.1 V126 M1203.5 111.0 V126 M1210.5 122.1 V126 M1218.5 120.8 V126 M1225.5 122.1 V126 M1233.5 119.9 V126 M1240.5 122.1 V126 M1248.5 120.8 V126 M1255.5 122.1 V126 M1263.5 118.2 V126 M1270.5 122.1 V126 M1278.5 120.8 V126 M1285.5 122.1 V126 M1293.5 119.9 V126 M1300.5 122.1 V126 M1308.5 120.8 V126 M1315.5 122.1 V126 M1323.5 111.0 V126 M1330.5 122.1 V126 M1338.5 120.8 V126 M1345.5 122.1 V126 M1353.5 119.9 V126 M1360.5 122.1 V126 M1368.5 120.8 V126 M1375.5 122.1 V126 M159.5 127.5 H175 M171.1 134.5 H175 M169.8 142.5 H175 M171.1 149.5 H175 M168.6 157.5 H175 M171.1 164.5 H175 M169.8 172.5 H175 M171.1 179.5 H175 M167.3 187.5 H175 M171.1 194.5 H175 M169.8 202.5 H175 M171.1 209.5 H175 M168.6 217.5 H175 M171.1 224.5 H175 M169.8 232.5 H175 M171.1 239.5 H175 M159.5 247.5 H175 M171.1 254.5 H175 M169.8 262.5 H175 M171.1 269.5 H175 M168.6 277.5 H175 M171.1 284.5 H175 M169.8 292.5 H175 M171.1 299.5 H175 M167.3 307.5 H175 M171.1 314.5 H175 M169.8 322.5 H175 M171.1 329.5 H175 M168.6 337.5 H175 M171.1 344.5 H175 M169.8 352.5 H175 M171.1 359.5 H175 M159.5 367.5 H175 M171.1 374.5 H175 M169.8 382.5 H175 M171.1 389.5 H175 M168.6 397.5 H175 M171.1 404.5 H175 M169.8 412.5 H175 M171.1 419.5 H175 M167.3 427.5 H175 M171.1 434.5 H175 M169.8 442.5 H175 M171.1 449.5 H175 M168.6 457.5 H175 M171.1 464.5 H175 M169.8 472.5 H175 M171.1 479.5 H175 M159.5 487.5 H175 M171.1 494.5 H175 M169.8 502.5 H175 M171.1 509.5 H175 M168.6 517.5 H175 M171.1 524.5 H175 M169.8 532.5 H175 M171.1 539.5 H175 M167.3 547.5 H175 M171.1 554.5 H175 M169.8 562.5 H175 M171.1 569.5 H175 M168.6 577.5 H175 M171.1 584.5 H175 M169.8 592.5 H175 M171.1 599.5 H175 M159.5 607.5 H175 M171.1 614.5 H175 M169.8 622.5 H175 M171.1 629.5 H175 M168.6 637.5 H175 M171.1 644.5 H175 M169.8 652.5 H175" stroke="#f6f6f6" stroke-width="1" fill="none"/>
<text x="245.0" y="120.200" font-family="Liberation Sans, sans-serif" font-size="9" font-weight="bold" fill="#fafafa">0</text>
<text x="365.0" y="120.200" font-family="Liberation Sans, sans-serif" font-size="9" font-weight="bold" fill="#fafafa">1</text>
<text x="485.0" y="120.200" font-family="Liberation Sans, sans-serif" font-size="9" font-weight="bold" fill="#fafafa">2</text>
<text x="605.0" y="120.200" font-family="Liberation Sans, sans-serif" font-size="9" font-weight="bold" fill="#fafafa">3</text>
<text x="725.0" y="120.200" font-family="Liberation Sans, sans-serif" font-size="9" font-weight="bold" fill="#fafafa">4</text>
<text x="845.0" y="120.200" font-family="Liberation Sans, sans-serif" font-size="9" font-weight="bold" fill="#fafafa">5</text>
<text x="965.0" y="120.200" font-family="Liberation Sans, sans-serif" font-size="9" font-weight="bold" fill="#fafafa">6</text>
<text x="1085.0" y="120.200" font-family="Liberation Sans, sans-serif" font-size="9" font-weight="bold" fill="#fafafa">7</text>
<text x="1205.0" y="120.200" font-family="Liberation Sans, sans-serif" font-size="9" font-weight="bold" fill="#fafafa">8</text>
<text x="1325.0" y="120.200" font-family="Liberation Sans, sans-serif" font-size="9" font-weight="bold" fill="#fafafa">9</text>
<text x="161" y="137.8" font-family="Liberation Sans, sans-serif" font-size="9.400" font-weight="bold" fill="#fafafa">0</text>
<text x="161" y="257.8" font-family="Liberation Sans, sans-serif" font-size="9.400" font-weight="bold" fill="#fafafa">1</text>
<text x="161" y="377.8" font-family="Liberation Sans, sans-serif" font-size="9.400" font-weight="bold" fill="#fafafa">2</text>
<text x="161" y="497.8" font-family="Liberation Sans, sans-serif" font-size="9.400" font-weight="bold" fill="#fafafa">3</text>
<text x="161" y="617.8" font-family="Liberation Sans, sans-serif" font-size="9.400" font-weight="bold" fill="#fafafa">4</text>
</svg></div>
<div id="rightdock" style="position:absolute;left:1377px;top:110px;width:59px;height:543px;background:#e8e8e8;overflow:hidden;"><svg width="59" height="543" viewBox="1377 110 59 543" style="position:absolute;left:0;top:0;display:block">
<rect x="1377" y="110" width="1" height="543" fill="#9a9a9a"/>
<rect x="1377" y="110" width="59" height="1" fill="#a8a8a8"/>
<path d="M1406.500 119.500 l-5.500 6 l5.500 6 M1415.500 119.500 l-5.500 6 l5.500 6" fill="none" stroke="#6b7784" stroke-width="1.500"/>
<text x="1387.20" y="186.70" font-family="Liberation Sans, sans-serif" font-size="10.0" fill="#3d4752" textLength="41.80" lengthAdjust="spacingAndGlyphs" >SETTINGS</text>
<text x="1386.60" y="243.70" font-family="Liberation Sans, sans-serif" font-size="10.0" fill="#3d4752" textLength="42.98" lengthAdjust="spacingAndGlyphs" >COMMENT</text>
<text x="1393.60" y="300.30" font-family="Liberation Sans, sans-serif" font-size="10.0" fill="#3d4752" textLength="28.41" lengthAdjust="spacingAndGlyphs" >SLIDES</text>
<text x="1390.50" y="357.20" font-family="Liberation Sans, sans-serif" font-size="10.0" fill="#3d4752" textLength="35.52" lengthAdjust="spacingAndGlyphs" >HISTORY</text>
<text x="1393.00" y="414.00" font-family="Liberation Sans, sans-serif" font-size="10.0" fill="#3d4752" textLength="30.58" lengthAdjust="spacingAndGlyphs" >LAYERS</text>
<text x="1393.50" y="471.00" font-family="Liberation Sans, sans-serif" font-size="10.0" fill="#3d4752" textLength="29.50" lengthAdjust="spacingAndGlyphs" >THEME</text>
<text x="1397.50" y="527.60" font-family="Liberation Sans, sans-serif" font-size="10.0" fill="#3d4752" textLength="21.48" lengthAdjust="spacingAndGlyphs" >CHAT</text>
<text x="1397.50" y="585.00" font-family="Liberation Sans, sans-serif" font-size="10.0" fill="#3d4752" textLength="22.00" lengthAdjust="spacingAndGlyphs" >DATA</text>
<path d="M1402.500 152.300 h8 l5.100 5.100 v10.700 a1.500 1.500 0 0 1 -1.500 1.500 h-11.600 a1.500 1.500 0 0 1 -1.500 -1.500 v-14.300 a1.500 1.500 0 0 1 1.500 -1.500 z" fill="none" stroke="#3d4752" stroke-width="2.100" stroke-linejoin="round"/><path d="M1410.600 152.300 l5 5 h-5 z" fill="#3d4752"/>
<path d="M1397.500 210.300 H1419.100 V225.500 H1401 V213.800 Z" fill="#3d4752"/>
<path d="M1405 214 h4.200 v3.200 l-1.600 3.800 h-1.700 l1 -3.400 h-1.900 z M1411.200 214 h4.200 v3.200 l-1.600 3.800 h-1.700 l1 -3.400 h-1.900 z" fill="#e8e8e8"/>
<rect x="1399.500" y="266.500" width="17.300" height="12" fill="none" stroke="#3d4752" stroke-width="2.100"/>
<path d="M1408.100 262.800 v3 M1405.200 279.500 l-1.600 4.600 M1411 279.500 l1.600 4.600" stroke="#3d4752" stroke-width="2"/>
<path d="M1406 269.800 l5 3.100 l-5 3.100 z" fill="#3d4752"/>
<circle cx="1408" cy="331" r="8.800" fill="#3d4752"/><path d="M1408 325.500 v5.800 l3.600 2.600" fill="none" stroke="#e8e8e8" stroke-width="1.700"/>
<path d="M1407.800 385.500 l9.800 5.200 l-9.800 5.600 l-9.800 -5.600 z" fill="#a2a8af"/>
<path d="M1407.800 378.500 l9.800 5.200 l-9.800 5.600 l-9.800 -5.600 z" fill="#3d4752"/>
<path d="M1400 436 h10.500 l5.500 5.500 v12 h-16 z" fill="none" stroke="#3d4752" stroke-width="1.800" stroke-linejoin="round"/>
<path d="M1408 440.800 c2 2.800 3.400 4.500 3.400 6.300 a3.400 3.400 0 0 1 -6.800 0 c0 -1.800 1.400 -3.500 3.400 -6.300 z" fill="#3d4752"/>
<path d="M1399 494 h18 v12.300 h-9 l-5.200 4.600 v-4.600 h-3.800 z" fill="none" stroke="#3d4752" stroke-width="1.800" stroke-linejoin="round"/>
<path d="M1408.200 549.800 l9 4.700 v9.200 l-9 4.700 l-9 -4.700 v-9.200 z" fill="none" stroke="#3d4752" stroke-width="1.800" stroke-linejoin="round"/>
<rect x="1407.200" y="557.500" width="2" height="6.200" fill="#3d4752"/><circle cx="1408.200" cy="554.700" r="1.200" fill="#3d4752"/>
</svg></div>
<div id="bottombar" style="position:absolute;left:0px;top:653px;width:1436px;height:29px;background:#76808c;overflow:hidden;"><svg width="1436" height="29" viewBox="0 653 1436 29" style="position:absolute;left:0;top:0;display:block">
<rect x="101.800" y="662.3" width="3" height="2.800" fill="#fff"/><rect x="106.600" y="662.3" width="15.700" height="2.800" fill="#fff"/>
<rect x="101.800" y="668.6" width="3" height="2.800" fill="#fff"/><rect x="106.600" y="668.6" width="15.700" height="2.800" fill="#fff"/>
<rect x="101.800" y="674.9" width="3" height="2.800" fill="#fff"/><rect x="106.600" y="674.9" width="15.700" height="2.800" fill="#fff"/>
<rect x="140.0" y="660.4" width="8.200" height="7.800" fill="#fff"/>
<rect x="150.0" y="660.4" width="8.200" height="7.800" fill="#fff"/>
<rect x="140.0" y="670.0" width="8.200" height="7.800" fill="#fff"/>
<rect x="150" y="670" width="8.200" height="7.800" fill="#fff"/>
<path d="M172 653 h71 v24.500 a3 3 0 0 1 -3 3 h-65 a3 3 0 0 1 -3 -3 z" fill="#3d4752"/>
<text x="182.20" y="671.80" font-family="Liberation Sans, sans-serif" font-size="14.2" font-weight="bold" fill="#fff" textLength="37.99" lengthAdjust="spacingAndGlyphs" >Page 1</text>
<path d="M224.800 663.800 h8.400 l-4.200 5.800 z" fill="#fff"/>
<circle cx="265.800" cy="669" r="8" fill="none" stroke="#fff" stroke-width="2.100"/><path d="M261.600 669 h8.400 M265.800 664.800 v8.400" stroke="#fff" stroke-width="2.100"/>
<rect x="1141.200" y="658" width="1" height="22" fill="#3d4752"/>
<circle cx="1162.700" cy="669" r="8.200" fill="none" stroke="#fff" stroke-width="2.100"/><path d="M1162.700 664 l3.700 8.400 l-3.700 -2.300 l-3.700 2.300 z" fill="#fff"/>
<rect x="1188" y="668" width="14" height="2.200" fill="#fff"/>
<rect x="1214" y="666.900" width="139" height="4.400" rx="2.200" fill="#adb0b4"/>
<circle cx="1269.500" cy="669.100" r="6.300" fill="#29a8e0"/>
<path d="M1365 669 h14 M1372 662 v14" stroke="#fff" stroke-width="2.200"/>
<text x="1386.60" y="673.80" font-family="Liberation Sans, sans-serif" font-size="14.2" font-weight="bold" fill="#fff" textLength="25.42" lengthAdjust="spacingAndGlyphs" >75%</text>
<path d="M1418.400 666.200 h8 l-4 5.600 z" fill="#fff"/>
</svg></div>
</div></body></html>
